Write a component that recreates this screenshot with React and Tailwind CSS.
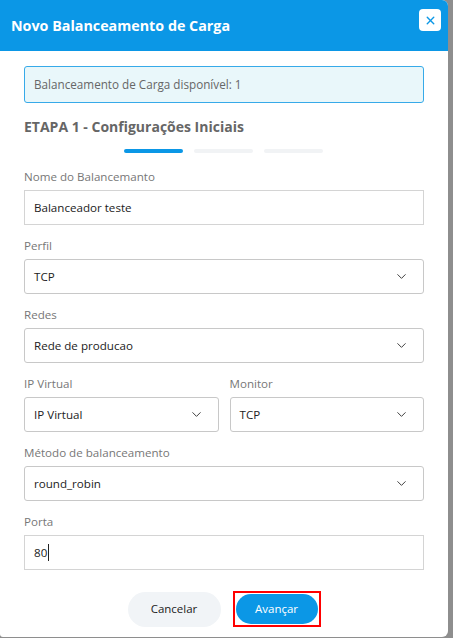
import { X, ChevronDown } from 'lucide-react';

const font = { fontFamily: '"Open Sans", "Noto Sans", sans-serif' };

function Label({ children }) {
    return <p className="text-[11.6px] leading-[17px] text-[#777] mb-[5px]">{children}</p>;
}

function TextField({ value, caret }) {
    return (
        <div className="h-[35px] border border-[#d4d4d4] flex items-center px-[9px] text-[11.6px] text-[#222]">
            {value}
            {caret && <span className="w-px h-[17px] bg-[#222] ml-px" />}
        </div>
    );
}

function SelectField({ value }) {
    return (
        <div className="h-[35px] border border-[#c8c8c8] rounded-[3px] flex items-center justify-between pl-[9px] pr-[14px] text-[11.6px] text-[#222]">
            <span>{value}</span>
            <ChevronDown size={15} strokeWidth={1.5} className="text-[#333]" />
        </div>
    );
}

export default function App() {
    return (
        <div className="w-[453px] h-[638px] flex bg-[#8e8e8e] overflow-hidden" style={font}>
            {/* modal */}
            <div className="w-[448px] h-[637px] bg-white rounded-r-[6px] rounded-bl-[3px] overflow-hidden flex flex-col">
                <div className="h-[51px] bg-[#0b97e6] flex items-center justify-between pl-[11px] pr-[6px]">
                    <h1 className="text-[14.3px] font-bold text-white">Novo Balanceamento de Carga</h1>
                    <button className="w-[22px] h-[22px] bg-white rounded-[4px] flex items-center justify-center -mt-[11px] mr-px">
                        <X size={13} strokeWidth={2.6} className="text-[#0b97e6]" />
                    </button>
                </div>

                <div className="px-[24px] pt-[15px]">
                    <div className="h-[37px] bg-[#e9f7fa] border border-[#37aae9] rounded-[3px] flex items-center px-[9px] text-[11.7px] text-[#666]">
                        Balanceamento de Carga disponível: 1
                    </div>

                    <h2 className="mt-[14px] text-[14px] font-bold text-[#666] leading-[20px]">ETAPA 1 - Configurações Iniciais</h2>

                    {/* steps */}
                    <div className="flex justify-center gap-[11px] mt-[12px] -ml-px">
                        <div className="w-[59px] h-[4px] rounded-full bg-[#0b97e6]" />
                        <div className="w-[59px] h-[4px] rounded-full bg-[#f1f3f5]" />
                        <div className="w-[59px] h-[4px] rounded-full bg-[#f1f3f5]" />
                    </div>

                    <div className="mt-[15px] flex flex-col gap-[12px]">
                        <div>
                            <Label>Nome do Balancemanto</Label>
                            <TextField value="Balanceador teste" />
                        </div>
                        <div>
                            <Label>Perfil</Label>
                            <SelectField value="TCP" />
                        </div>
                        <div>
                            <Label>Redes</Label>
                            <SelectField value="Rede de producao" />
                        </div>
                        <div className="grid grid-cols-2 gap-[11px]">
                            <div>
                                <Label>IP Virtual</Label>
                                <SelectField value="IP Virtual" />
                            </div>
                            <div>
                                <Label>Monitor</Label>
                                <SelectField value="TCP" />
                            </div>
                        </div>
                        <div>
                            <Label>Método de balanceamento</Label>
                            <SelectField value="round_robin" />
                        </div>
                        <div>
                            <Label>Porta</Label>
                            <TextField value="80" caret />
                        </div>
                    </div>

                    <div className="flex justify-center items-center gap-[12px] mt-[21px]">
                        <button className="w-[93px] h-[35px] rounded-full bg-[#f1f4f7] text-[11.5px] text-[#222]">Cancelar</button>
                        <div className="border-2 border-[#f00] p-px">
                            <button className="w-[82px] h-[30px] rounded-full bg-[#0b97e6] text-[11.5px] text-white">Avançar</button>
                        </div>
                    </div>
                </div>
            </div>
        </div>
    );
}
